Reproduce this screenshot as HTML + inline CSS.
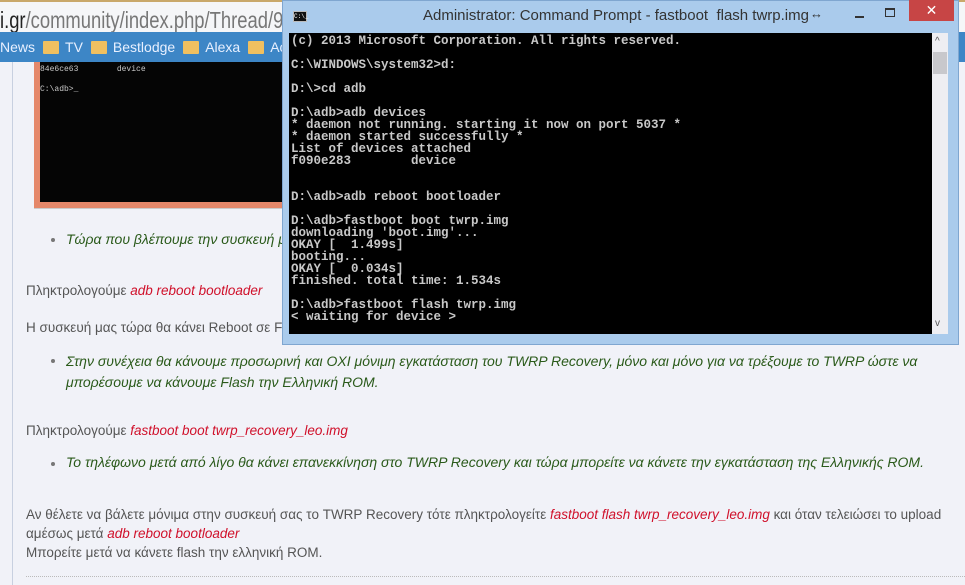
<!DOCTYPE html>
<html><head><meta charset="utf-8"><style>
*{margin:0;padding:0;box-sizing:border-box}
body{width:965px;height:585px;overflow:hidden;background:#f1f2f8;font-family:"Liberation Sans",sans-serif;position:relative}
.abs{position:absolute}
.mono{font-family:"Liberation Mono",monospace;color:#c8c8c8;font-size:12.5px;line-height:12px;white-space:pre;font-weight:bold}
.g{color:#2a5a1a;font-style:italic;font-size:14px}
.r{color:#d0102a;font-style:italic}
.t{color:#555;font-size:13.5px}
.bul{position:absolute;width:4px;height:4px;background:#777;border-radius:2px}
.fold{display:inline-block;width:16px;height:13px;background:#f0c060;border-radius:1px;vertical-align:-2px;margin:0 6px 0 8px}
</style></head><body>
<div class="abs" style="left:0;top:0;width:965px;height:2px;background:#c9a86a"></div>
<div class="abs" style="left:0;top:2px;width:965px;height:30px;background:#f5f6f8"></div>
<div class="abs" style="left:0;top:8px;font-size:23px;color:#777;line-height:24px;white-space:nowrap;transform:scaleX(0.8);transform-origin:0 0"><span style="color:#222">i.gr</span>/community/index.php/Thread/9388</div>
<div class="abs" style="left:0;top:32px;width:965px;height:30px;background:#3d86c6;color:#e8f0ff;font-size:14px;line-height:30px;padding-left:0">News<span class="fold"></span>TV<span class="fold"></span>Bestlodge<span class="fold"></span>Alexa<span class="fold"></span>Acc</div>
<div class="abs" style="left:12px;top:62px;width:1px;height:523px;background:#c8d0e0"></div>
<div class="abs" style="left:34px;top:62px;width:250px;height:147px;background:#e5886a;border-bottom:1px solid #ccc"></div>
<div class="abs mono" style="left:40px;top:62px;width:244px;height:140px;background:#050505;font-size:8px;line-height:10px;padding-top:3px;font-weight:normal">84e6ce63        device

C:\adb>_</div>
<div class="bul" style="left:51px;top:238px"></div>
<div class="abs g" style="left:66px;top:231px">Τώρα που βλέπουμε την συσκευή μ</div>
<div class="abs t" style="left:26px;top:283px">Πληκτρολογούμε <span class="r">adb reboot bootloader</span></div>
<div class="abs t" style="left:26px;top:320px">Η συσκευή μας τώρα θα κάνει Reboot σε Fa</div>
<div class="bul" style="left:51px;top:359px"></div>
<div class="abs g" style="left:66px;top:351px;line-height:21px;width:880px">Στην συνέχεια θα κάνουμε προσωρινή και ΟΧΙ μόνιμη εγκατάσταση του TWRP Recovery, μόνο και μόνο για να τρέξουμε το TWRP ώστε να μπορέσουμε να κάνουμε Flash την Ελληνική ROM.</div>
<div class="abs t" style="left:26px;top:423px">Πληκτρολογούμε <span class="r">fastboot boot twrp_recovery_leo.img</span></div>
<div class="bul" style="left:51px;top:462px"></div>
<div class="abs g" style="left:66px;top:454px;white-space:nowrap">Το τηλέφωνο μετά από λίγο θα κάνει επανεκκίνηση στο TWRP Recovery και τώρα μπορείτε να κάνετε την εγκατάσταση της Ελληνικής ROM.</div>
<div class="abs t" style="left:26px;top:505px;line-height:19px;width:930px">Αν θέλετε να βάλετε μόνιμα στην συσκευή σας το TWRP Recovery τότε πληκτρολογείτε <span class="r">fastboot flash twrp_recovery_leo.img</span> και όταν τελειώσει το upload<br>αμέσως μετά <span class="r">adb reboot bootloader</span><br>Μπορείτε μετά να κάνετε flash την ελληνική ROM.</div>
<div class="abs" style="left:26px;top:576px;width:939px;border-top:1px dotted #bbb"></div>
<!-- cmd window -->
<div class="abs" style="left:282px;top:0;width:677px;height:345px;background:#aacbec;border:1px solid #7fa6d0"></div>
<div class="abs" style="left:293px;top:11px;width:14px;height:11px;background:#111;border:1px solid #bbb;font-size:6px;color:#fff;line-height:9px;font-family:'Liberation Mono',monospace">C:\_</div>
<div class="abs" style="left:423px;top:7px;font-size:15px;color:#333">Administrator: Command Prompt - fastboot&nbsp; flash twrp.img</div>
<div class="abs" style="left:810px;top:6px;font-size:13px;color:#333">↔</div>
<div class="abs" style="left:855px;top:16px;width:9px;height:2px;background:#333"></div>
<div class="abs" style="left:885px;top:8px;width:10px;height:9px;border:1px solid #333;border-top-width:2px"></div>
<div class="abs" style="left:909px;top:0;width:45px;height:21px;background:#c74545;color:#fff;font-size:14px;text-align:center;line-height:20px">✕</div>
<div class="abs mono" style="left:289px;top:33px;width:643px;height:301px;background:#000;padding:2px 0 0 2px">(c) 2013 Microsoft Corporation. All rights reserved.

C:\WINDOWS\system32>d:

D:\>cd adb

D:\adb>adb devices
* daemon not running. starting it now on port 5037 *
* daemon started successfully *
List of devices attached
f090e283        device


D:\adb>adb reboot bootloader

D:\adb>fastboot boot twrp.img
downloading 'boot.img'...
OKAY [  1.499s]
booting...
OKAY [  0.034s]
finished. total time: 1.534s

D:\adb>fastboot flash twrp.img
&lt; waiting for device &gt;</div>
<div class="abs" style="left:932px;top:33px;width:16px;height:301px;background:#eeeef2"></div>
<div class="abs" style="left:933px;top:52px;width:14px;height:22px;background:#c8c8cc"></div>
<div class="abs" style="left:935px;top:36px;font-size:10px;color:#555">^</div>
<div class="abs" style="left:935px;top:318px;font-size:10px;color:#555">v</div>
</body></html>
